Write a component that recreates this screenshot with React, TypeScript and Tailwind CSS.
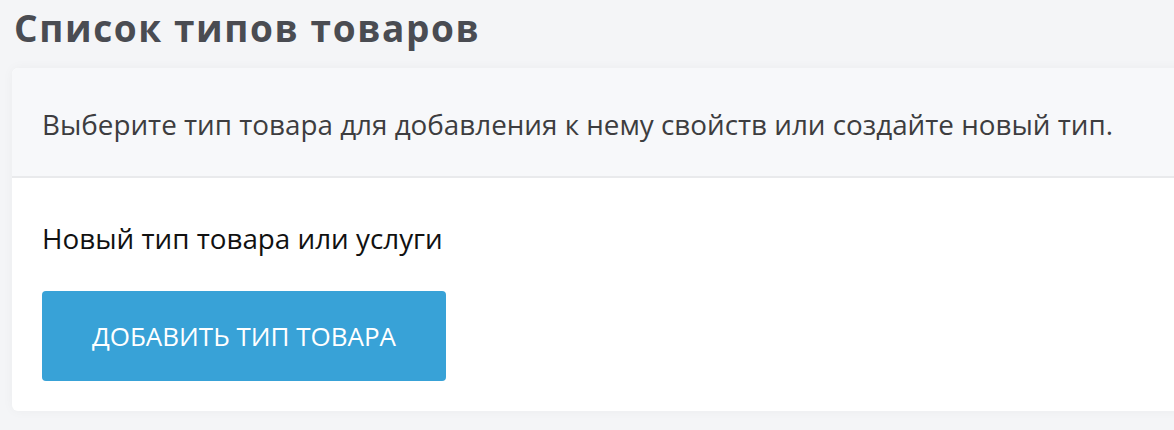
export default function App() {
  return (
    <div className="w-[1174px] h-[430px] overflow-hidden bg-[#f4f5f7]" style={{ fontFamily: '"Open Sans", sans-serif' }}>
      <h1 className="pl-[14px] pt-[4px] h-[68px] text-[37px] leading-[48px] font-bold tracking-[1.6px] text-[#4a4c52]">
        Список типов товаров
      </h1>
      <div className="ml-[12px] w-[1200px] h-[343px] rounded-[6px] bg-white shadow-[0_0_12px_rgba(0,0,0,0.04)] overflow-hidden">
        <div className="h-[110px] bg-[#f7f8fa] border-b-2 border-[#e9eaec] flex items-center pl-[30px] pt-[4px]">
          <p className="text-[27.8px] leading-[40px] text-[#3d3d3f]">
            Выберите тип товара для добавления к нему свойств или создайте новый тип.
          </p>
        </div>
        <div className="pl-[30px] pt-[38px]">
          <p className="text-[27.8px] leading-[44px] text-[#111]">Новый тип товара или услуги</p>
          <button className="mt-[31px] w-[404px] h-[90px] rounded-[4px] bg-[#38a2d7] text-white text-[26px] uppercase">
            Добавить тип товара
          </button>
        </div>
      </div>
    </div>
  );
}
